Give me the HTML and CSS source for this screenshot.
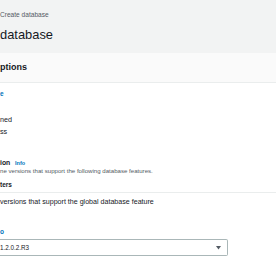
FILE: index.html
```html
<!DOCTYPE html>
<html>
<head>
<meta charset="utf-8">
<link rel="stylesheet" href="styles.css">
</head>
<body>
<div class="page">
  <div class="crumb">Create database</div>
  <h1 class="title">database</h1>
  <section class="panel">
    <div class="panel-head"><h2 class="panel-title">ptions</h2></div>
    <div class="panel-body">
      <div class="link-label">e</div>
      <div class="radio-row first">ned</div>
      <div class="radio-row">ss</div>
      <div class="field-label">ion <span class="info">Info</span></div>
      <div class="desc">ne versions that support the following database features.</div>
      <div class="filter-label">ters</div>
      <div class="filter-box">
        <div class="check-text">versions that support the global database feature</div>
      </div>
      <div class="link-label second">o</div>
      <div class="select">
        <span class="select-value">1.2.0.2.R3</span>
        <svg class="caret" width="5" height="4" viewBox="0 0 5 4"><polygon points="0,0 5,0 2.5,3.6" fill="#545b64"/></svg>
      </div>
    </div>
  </section>
</div>
</body>
</html>
```

FILE: styles.css
```css
html, body {
  margin: 0;
  padding: 0;
}
body {
  width: 276px;
  height: 260px;
  overflow: hidden;
  background: #f2f3f3;
  font-family: "Liberation Sans", Arial, sans-serif;
  color: #16191f;
}
.page {
  padding-top: 10.4px;
}
.crumb {
  font-size: 6.6px;
  line-height: 10px;
  height: 10px;
  color: #545b64;
  white-space: nowrap;
}
.title {
  margin: 7.1px 0 0 0;
  font-size: 12.9px;
  line-height: 16px;
  height: 16px;
  font-weight: normal;
  white-space: nowrap;
}
.panel {
  margin-top: 9.5px;
  background: #ffffff;
  border-bottom: 1px solid #d5dbdb;
  box-shadow: 0 1px 1px 0 rgba(0, 28, 36, 0.3);
}
.panel-head {
  background: #fafafa;
  height: 29px;
  border-bottom: 1px solid #eaeded;
}
.panel-title {
  margin: 0;
  font-size: 9px;
  line-height: 29px;
  font-weight: bold;
  white-space: nowrap;
}
.panel-body {
  padding-top: 6.45px;
  padding-bottom: 7px;
}
.link-label {
  font-size: 6.5px;
  line-height: 10px;
  height: 10px;
  font-weight: bold;
  color: #0073bb;
}
.link-label.second {
  margin-top: 19.2px;
}
.radio-row {
  font-size: 7.2px;
  line-height: 10px;
  height: 10px;
  margin-top: 2px;
  white-space: nowrap;
}
.radio-row.first {
  margin-top: 15.55px;
}
.field-label {
  margin-top: 21.64px;
  font-size: 6.8px;
  line-height: 8px;
  height: 8px;
  font-weight: bold;
  white-space: nowrap;
}
.info {
  font-size: 5.5px;
  color: #0073bb;
  margin-left: 3px;
}
.desc {
  margin-top: 0.26px;
  font-size: 6.1px;
  line-height: 8px;
  height: 8px;
  color: #545b64;
  white-space: nowrap;
}
.filter-label {
  margin-top: 5.85px;
  font-size: 6.5px;
  line-height: 8px;
  height: 8px;
  font-weight: bold;
  white-space: nowrap;
}
.filter-box {
  margin-top: 3.25px;
  border-top: 1px solid #eaeded;
  padding-top: 4.54px;
}
.check-text {
  font-size: 7.1px;
  line-height: 10px;
  height: 10px;
  white-space: nowrap;
}
.select {
  margin-top: 2.25px;
  width: 220.5px;
  height: 15px;
  border: 1px solid #aab7b8;
  border-left: none;
  border-radius: 0 2px 2px 0;
  background: #ffffff;
  display: flex;
  align-items: center;
  justify-content: space-between;
  padding-right: 6.5px;
}
.select-value {
  font-size: 6.3px;
  line-height: 15px;
  white-space: nowrap;
}
.caret {
  display: block;
  margin-top: 1px;
}
```
